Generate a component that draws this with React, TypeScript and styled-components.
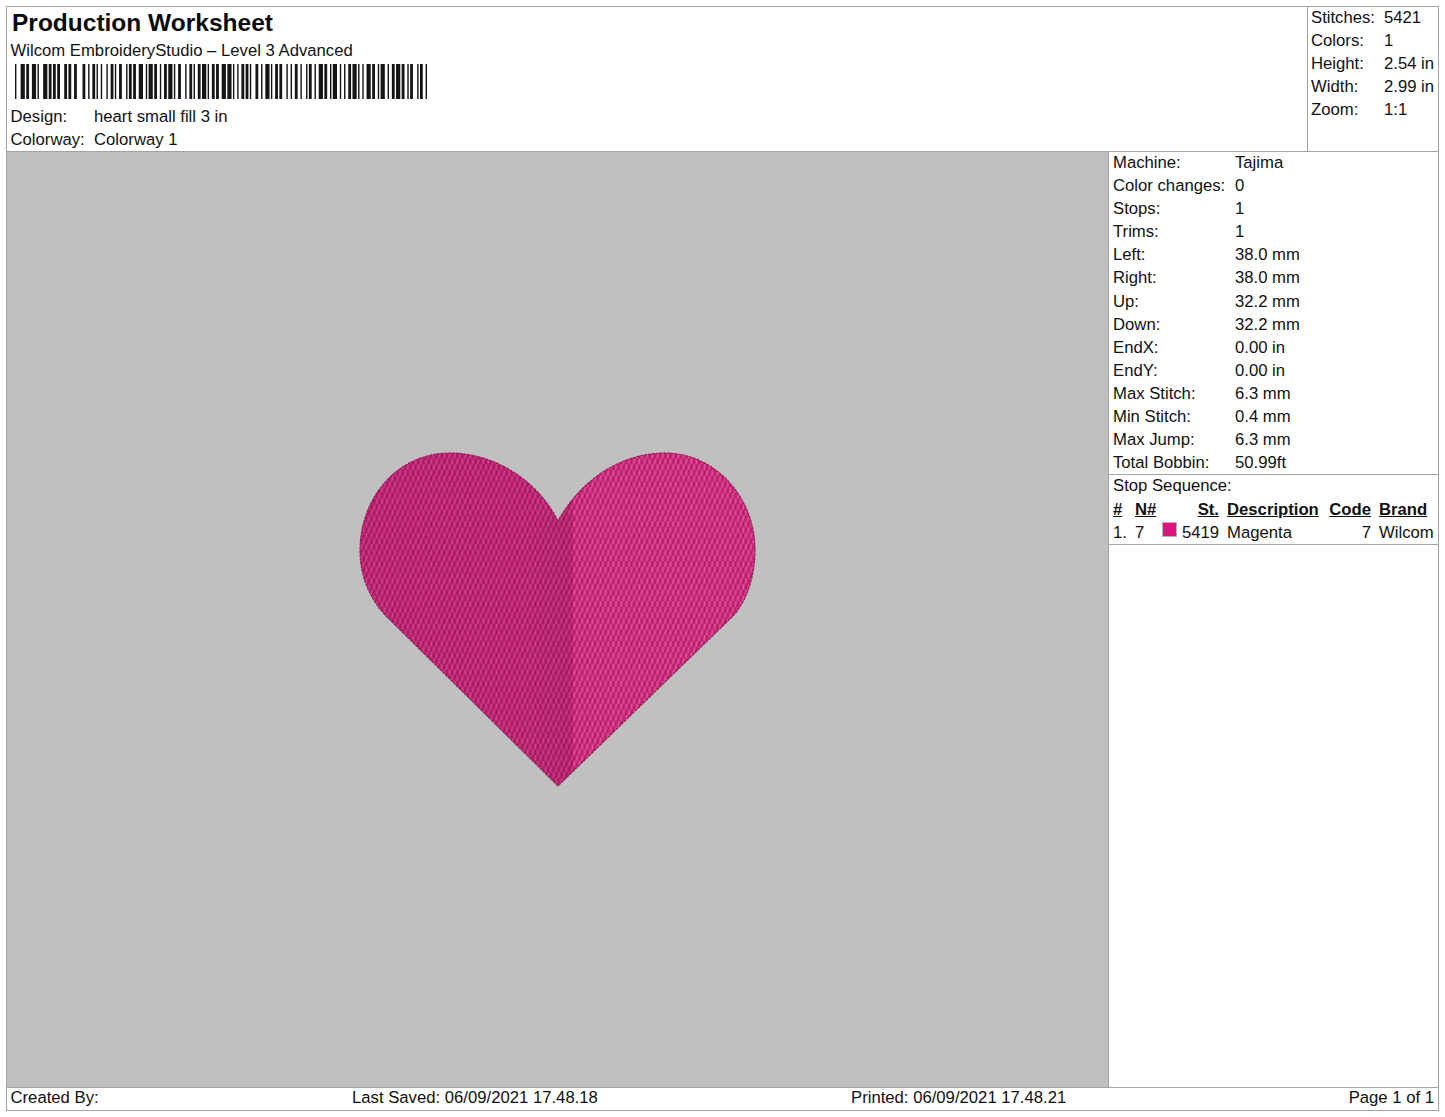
import React from "react";
import styled, { createGlobalStyle } from "styled-components";

const GlobalStyle = createGlobalStyle`
  html, body {
    margin: 0;
    padding: 0;
    background: #fff;
    color: #111;
    font-family: "Liberation Sans", Arial, sans-serif;
    font-size: 16.7px;
  }
`;

const LINE = "#a3a3a3";

const Sheet = styled.div`
  box-sizing: border-box;
  width: 1433px;
  height: 1105px;
  margin: 6px 0 0 6px;
  border: 1px solid ${LINE};
  display: flex;
  flex-direction: column;
`;

const Header = styled.header`
  height: 144px;
  flex: none;
  display: flex;
  border-bottom: 1px solid ${LINE};
`;

const TitleBlock = styled.div`
  flex: 1;
  padding: 0 0 0 3.5px;
`;

const Title = styled.h1`
  margin: 0 0 0 1.5px;
  font-size: 24.5px;
  line-height: 31px;
  font-weight: bold;
  color: #0a0a0a;
`;

const Subtitle = styled.div`
  line-height: 24px;
  margin-top: 1px;
`;

const Barcode = styled.svg`
  display: block;
  margin: 1px 0 6px 4.5px;
  width: 412px;
  height: 35px;
`;

const HeaderRow = styled.div`
  display: grid;
  grid-template-columns: 83.5px 1fr;
  line-height: 23.1px;
`;

const StatsBox = styled.div`
  width: 131px;
  flex: none;
  border-left: 1px solid ${LINE};
  padding-left: 3px;
  box-sizing: border-box;
`;

const StatRow = styled.div`
  display: grid;
  grid-template-columns: 73px 1fr;
  height: 23.1px;
  line-height: 22px;
  white-space: nowrap;
`;

const Main = styled.main`
  flex: 1;
  display: flex;
  min-height: 0;
`;

const Canvas = styled.div`
  flex: 1;
  background: #c0c0c0;
  border-right: 1px solid ${LINE};
  display: flex;
  align-items: center;
  justify-content: center;
`;

const Heart = styled.svg`
  display: block;
  overflow: visible;
`;

const Sidebar = styled.aside`
  width: 329px;
  flex: none;
  display: flex;
  flex-direction: column;
`;

const MachineList = styled.div`
  padding: 0 0 0 4px;
  height: 323px;
  box-sizing: border-box;
  border-bottom: 1px solid ${LINE};
`;

const MachineRow = styled.div`
  display: grid;
  grid-template-columns: 122px 1fr;
  height: 23.1px;
  line-height: 21px;
`;

const StopSection = styled.section`
  height: 70px;
  box-sizing: border-box;
  padding: 0 0 0 4px;
  border-bottom: 1px solid ${LINE};
`;

const StopTitle = styled.div`
  height: 23px;
  line-height: 21px;
`;

const StopGrid = styled.div`
  display: grid;
  grid-template-columns: 22px 28px 14px 42px 100px 52px 64px;
  grid-auto-rows: 23px;
  line-height: 23px;
  white-space: nowrap;
`;

const HeadCell = styled.span<{ $right?: boolean; $inset?: boolean }>`
  font-weight: bold;
  text-decoration: underline;
  text-align: ${({ $right }) => ($right ? "right" : "left")};
  padding-left: ${({ $inset }) => ($inset ? "8px" : "0")};
`;

const Cell = styled.span<{ $right?: boolean; $inset?: boolean }>`
  text-align: ${({ $right }) => ($right ? "right" : "left")};
  padding-left: ${({ $inset }) => ($inset ? "8px" : "0")};
`;

const Swatch = styled.span`
  display: block;
  width: 15px;
  height: 15px;
  margin: 1px 0 0 -1px;
  background: #e0127f;
  border: 1px solid #b5b5b5;
  box-sizing: border-box;
`;

const Footer = styled.footer`
  flex: none;
  height: 22px;
  border-top: 1px solid ${LINE};
  display: grid;
  grid-template-columns: 341.5px 499px 1fr auto;
  padding: 0 4px 0 3.5px;
  line-height: 20px;
  white-space: nowrap;
`;

// bar/space widths in modules, taken by eye from the printed code
const BAR_MODULES =
  "1331223113312121232122242212" +
  "2112131221122311212232113122" +
  "1221311223122112213112212231" +
  "3112122121132212311221231212" +
  "2213112212312211321212213112" +
  "1231221132122131221123112212";

const buildBars = (modules: string) => {
  const bars: { x: number; w: number }[] = [];
  let x = 0;
  modules.split("").forEach((d, i) => {
    const w = Number(d);
    if (i % 2 === 0) bars.push({ x, w });
    x += w;
  });
  const last = bars[bars.length - 1];
  return { bars, total: last.x + last.w };
};

const barcode = buildBars(BAR_MODULES);

const HEART_PATH =
  "M198 68 C178 28 135 0 90 0 C38 0 0 44 0 98 C0 122 9 145 26 163 L198 333 L372 164 C386 150 395 124 395 97 C395 44 355 0 305 0 C260 0 220 28 198 68 Z";

const machine = [
  ["Machine:", "Tajima"],
  ["Color changes:", "0"],
  ["Stops:", "1"],
  ["Trims:", "1"],
  ["Left:", "38.0 mm"],
  ["Right:", "38.0 mm"],
  ["Up:", "32.2 mm"],
  ["Down:", "32.2 mm"],
  ["EndX:", "0.00 in"],
  ["EndY:", "0.00 in"],
  ["Max Stitch:", "6.3 mm"],
  ["Min Stitch:", "0.4 mm"],
  ["Max Jump:", "6.3 mm"],
  ["Total Bobbin:", "50.99ft"],
];

const stats = [
  ["Stitches:", "5421"],
  ["Colors:", "1"],
  ["Height:", "2.54 in"],
  ["Width:", "2.99 in"],
  ["Zoom:", "1:1"],
];

const StitchPattern = ({ id, base, light, dark }: { id: string; base: string; light: string; dark: string }) => (
  <pattern id={id} width="5.2" height="11.4" patternUnits="userSpaceOnUse">
    <rect width="5.2" height="11.4" fill={base} />
    <path d="M1.5 0.6 L0.9 5" stroke={light} strokeWidth="1.4" strokeLinecap="round" />
    <path d="M4.1 6.3 L3.5 10.7" stroke={light} strokeWidth="1.4" strokeLinecap="round" />
    <path d="M4 0.4 L3.5 5.2" stroke={dark} strokeWidth="1.2" />
    <path d="M1.4 6.1 L0.9 10.9" stroke={dark} strokeWidth="1.2" />
    <path d="M0 5.7 H5.2 M0 11.4 H5.2" stroke={dark} strokeWidth="0.5" strokeOpacity="0.5" />
  </pattern>
);

const HeartArt = () => (
  <Heart width="396" height="334" viewBox="0 0 396 334">
    <defs>
      <StitchPattern id="stitchLeft" base="#bb2570" light="#d63f8c" dark="#99195a" />
      <StitchPattern id="stitchRight" base="#ca2b7a" light="#ea509c" dark="#a81f63" />
      <linearGradient id="seamShade" x1="0" x2="1" y1="0" y2="0">
        <stop offset="0" stopColor="#8c1050" stopOpacity="0" />
        <stop offset="1" stopColor="#8c1050" stopOpacity="0.12" />
      </linearGradient>
      <clipPath id="heartClip">
        <path d={HEART_PATH} />
      </clipPath>
    </defs>
    <g clipPath="url(#heartClip)">
      <rect x="0" y="0" width="213" height="334" fill="url(#stitchLeft)" />
      <rect x="213" y="0" width="183" height="334" fill="url(#stitchRight)" />
      <rect x="170" y="60" width="43" height="274" fill="url(#seamShade)" />
    </g>
    <path d={HEART_PATH} fill="none" stroke="#941655" strokeWidth="1.1" strokeDasharray="3 0.8" />
  </Heart>
);

export default function App() {
  return (
    <>
      <GlobalStyle />
      <Sheet>
        <Header>
          <TitleBlock>
            <Title>Production Worksheet</Title>
            <Subtitle>Wilcom EmbroideryStudio – Level 3 Advanced</Subtitle>
            <Barcode viewBox={`0 0 ${barcode.total} 35`} preserveAspectRatio="none">
              {barcode.bars.map((b) => (
                <rect key={b.x} x={b.x} y="0" width={b.w} height="35" fill="#151515" />
              ))}
            </Barcode>
            <HeaderRow>
              <span>Design:</span>
              <span>heart small fill 3 in</span>
            </HeaderRow>
            <HeaderRow>
              <span>Colorway:</span>
              <span>Colorway 1</span>
            </HeaderRow>
          </TitleBlock>
          <StatsBox>
            {stats.map(([k, v]) => (
              <StatRow key={k}>
                <span>{k}</span>
                <span>{v}</span>
              </StatRow>
            ))}
          </StatsBox>
        </Header>
        <Main>
          <Canvas>
            <HeartArt />
          </Canvas>
          <Sidebar>
            <MachineList>
              {machine.map(([k, v]) => (
                <MachineRow key={k}>
                  <span>{k}</span>
                  <span>{v}</span>
                </MachineRow>
              ))}
            </MachineList>
            <StopSection>
              <StopTitle>Stop Sequence:</StopTitle>
              <StopGrid>
                <HeadCell>#</HeadCell>
                <HeadCell>N#</HeadCell>
                <span />
                <HeadCell $right>St.</HeadCell>
                <HeadCell $inset>Description</HeadCell>
                <HeadCell $right>Code</HeadCell>
                <HeadCell $inset>Brand</HeadCell>
                <Cell>1.</Cell>
                <Cell>7</Cell>
                <Swatch />
                <Cell $right>5419</Cell>
                <Cell $inset>Magenta</Cell>
                <Cell $right>7</Cell>
                <Cell $inset>Wilcom</Cell>
              </StopGrid>
            </StopSection>
          </Sidebar>
        </Main>
        <Footer>
          <span>Created By:</span>
          <span>Last Saved: 06/09/2021 17.48.18</span>
          <span>Printed: 06/09/2021 17.48.21</span>
          <span>Page 1 of 1</span>
        </Footer>
      </Sheet>
    </>
  );
}
